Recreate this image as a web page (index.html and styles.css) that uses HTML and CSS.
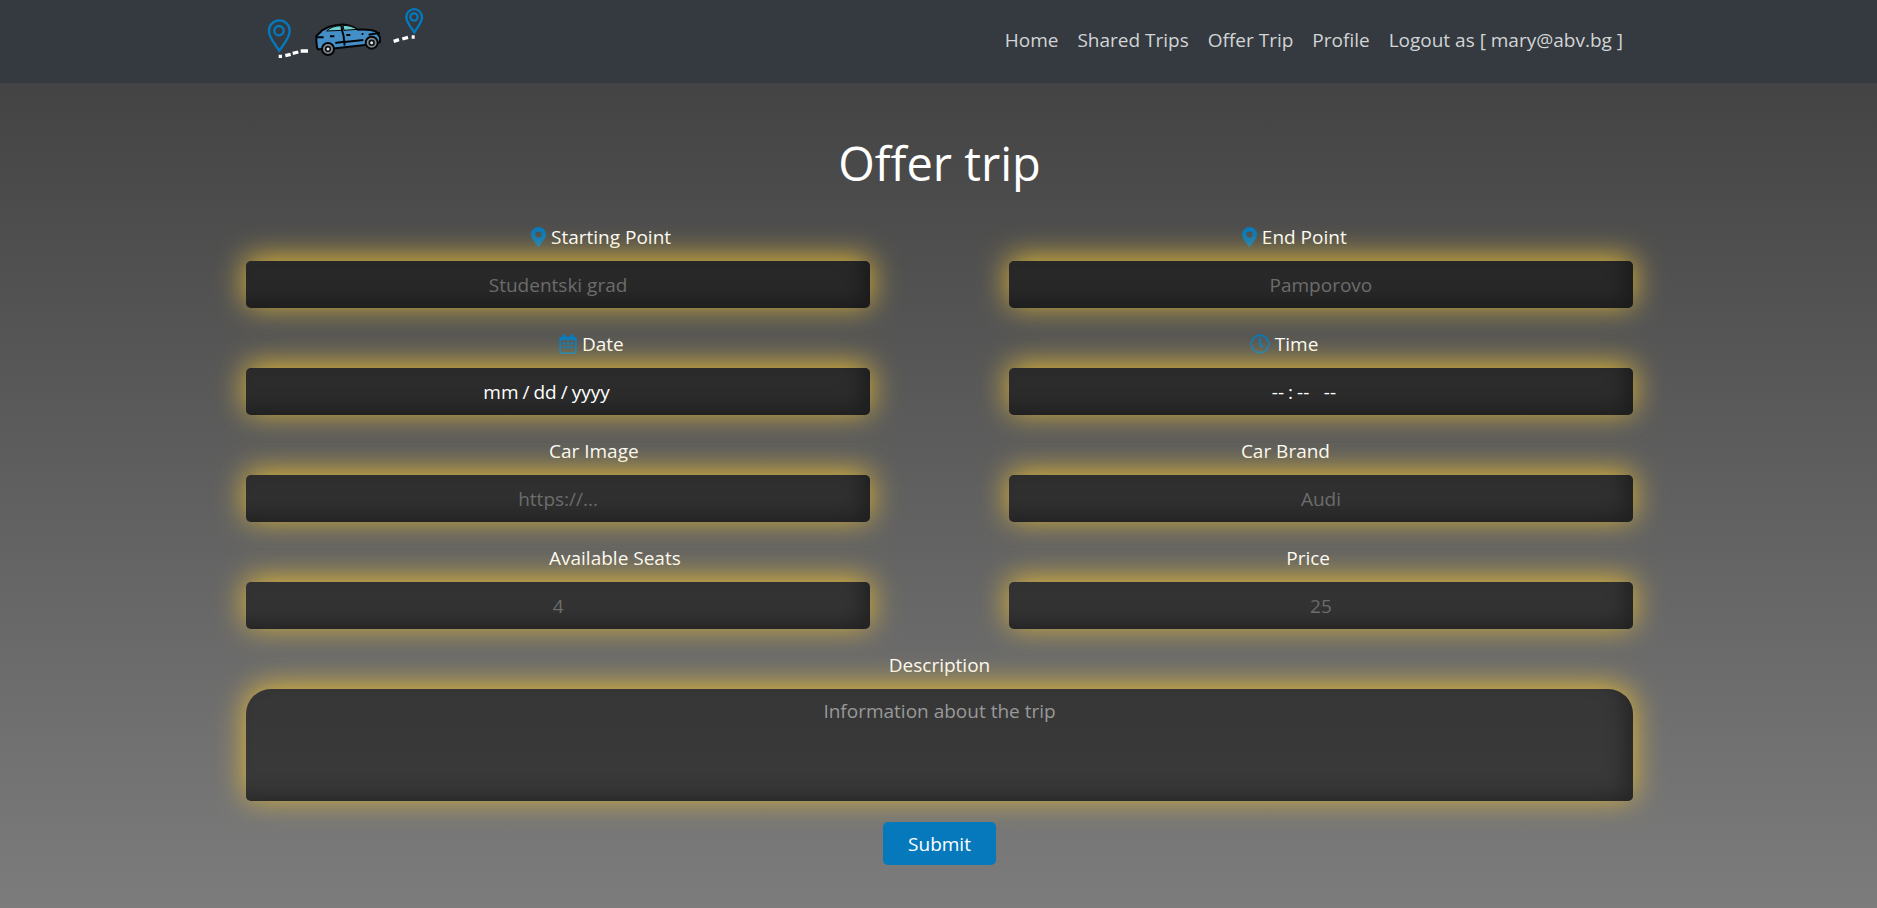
FILE: index.html
```html
<!DOCTYPE html>
<html lang="en">
<head>
<meta charset="utf-8">
<title>Offer trip</title>
<link rel="stylesheet" href="styles.css">
</head>
<body>
<header class="navbar">
  <a class="brand" href="#" aria-label="Shared trips home">
    <svg class="logo" viewBox="45 15 486 165" aria-hidden="true">
      <g fill="none" stroke="#0679bd" stroke-width="7" stroke-linejoin="round">
        <path d="M88 153C75 130 57 115 57 92a31 31 0 0 1 62 0c0 23-18 38-31 61z"/>
        <circle cx="87" cy="92" r="14"/>
        <path d="M493 98C483 80 469 68 469 51a23.500 23.500 0 0 1 47 0c0 17-13 29-23 47z"/>
        <circle cx="492" cy="51" r="11"/>
      </g>
      <g stroke="#fff" stroke-width="10">
        <path d="M86 169h10M106 167l16-4M128 160l17-4M152 153h22M431 124l16-5M457 117l17-5M485 111h9"/>
      </g>
      <g stroke="#050505" stroke-width="6" stroke-linejoin="round">
        <path fill="#458fc9" d="M199 108l12-11 4-5 20-11c18-6 38-8 50-7 16 1 26 7 39 15 20-1 42 0 55 6l11 17v14l-12 5-134 15-40 2-3-6-2-20z"/>
        <path fill="#6ed3d0" stroke-width="3" d="M230 93c9-10 24-15 43-16l3 14zM279 76c16 0 30 4 43 12l-40 3z"/>
        <path fill="none" d="M275 77c-2 10 4 20 6 32l3 28M199 112h22M240 109h13M289 105h12M335 102h5M284 126l56-6M356 104l34-6M256 129l26-4"/>
        <circle cx="234" cy="147" r="18" fill="#7d8893"/>
        <circle cx="365" cy="128" r="18" fill="#7d8893"/>
      </g>
      <g fill="#e8e8e8" stroke="#111" stroke-width="5">
        <circle cx="234" cy="147" r="7"/>
        <circle cx="365" cy="128" r="7"/>
      </g>
    </svg>
  </a>
  <nav class="links">
    <a href="#">Home</a>
    <a href="#">Shared Trips</a>
    <a href="#">Offer Trip</a>
    <a href="#">Profile</a>
    <a href="#">Logout as [ mary@abv.bg ]</a>
  </nav>
</header>
<main class="page">
  <h1 class="title">Offer trip</h1>
  <form class="form">
    <div class="field">
      <label class="label label-start" for="start"><svg class="icon icon-pin" viewBox="0 0 384 512" aria-hidden="true"><path d="M172 502C27 291 0 270 0 192a192 192 0 0 1 384 0c0 78-27 99-172 310a24 24 0 0 1-40 0zM192 272a80 80 0 1 0 0-160 80 80 0 0 0 0 160z"/></svg>Starting Point</label>
      <input class="control" id="start" type="text" placeholder="Studentski grad">
    </div>
    <div class="field">
      <label class="label label-end" for="end"><svg class="icon icon-pin" viewBox="0 0 384 512" aria-hidden="true"><path d="M172 502C27 291 0 270 0 192a192 192 0 0 1 384 0c0 78-27 99-172 310a24 24 0 0 1-40 0zM192 272a80 80 0 1 0 0-160 80 80 0 0 0 0 160z"/></svg>End Point</label>
      <input class="control" id="end" type="text" placeholder="Pamporovo">
    </div>
    <div class="field">
      <label class="label label-date" for="date"><svg class="icon icon-calendar" viewBox="0 0 448 512" aria-hidden="true"><path fill-rule="evenodd" d="M400 64h-48V12c0-7-5-12-12-12h-40c-7 0-12 5-12 12v52H160V12c0-7-5-12-12-12h-40c-7 0-12 5-12 12v52H48a48 48 0 0 0-48 48v352a48 48 0 0 0 48 48h352a48 48 0 0 0 48-48V112a48 48 0 0 0-48-48zM48 160h352v298a6 6 0 0 1-6 6H54a6 6 0 0 1-6-6z"/><path d="M96 208h64v64H96zM192 208h64v64h-64zM288 208h64v64h-64zM96 304h64v64H96zM192 304h64v64h-64zM288 304h64v64h-64z"/></svg>Date</label>
      <input class="control" id="date" type="date">
    </div>
    <div class="field">
      <label class="label label-time" for="time"><svg class="icon icon-clock" viewBox="0 0 512 512" aria-hidden="true"><path fill-rule="evenodd" d="M256 8a248 248 0 1 0 0 496 248 248 0 0 0 0-496zm0 448a200 200 0 1 1 0-400 200 200 0 0 1 0 400z"/><path d="M318 354l-85-62c-3-2-5-6-5-10V116c0-7 5-12 12-12h32c7 0 12 5 12 12v142l67 48c5 4 6 12 2 17l-18 26c-4 6-12 8-17 5z"/></svg>Time</label>
      <input class="control" id="time" type="time">
    </div>
    <div class="field">
      <label class="label label-car" for="image">Car Image</label>
      <input class="control" id="image" type="text" placeholder="https://...">
    </div>
    <div class="field">
      <label class="label label-right" for="brand">Car Brand</label>
      <input class="control" id="brand" type="text" placeholder="Audi">
    </div>
    <div class="field">
      <label class="label label-car" for="seats">Available Seats</label>
      <input class="control" id="seats" type="text" placeholder="4">
    </div>
    <div class="field">
      <label class="label label-right" for="price">Price</label>
      <input class="control" id="price" type="text" placeholder="25">
    </div>
    <div class="field field-wide">
      <label class="label label-center" for="description">Description</label>
      <textarea class="control control-area" id="description" placeholder="Information about the trip"></textarea>
    </div>
    <button class="submit" type="submit">Submit</button>
  </form>
</main>
</body>
</html>
```
FILE: styles.css
```css
* {
  box-sizing: border-box;
}

body {
  margin: 0;
  min-height: 100vh;
  font-family: "Segoe UI", "Open Sans", sans-serif;
  font-size: 19px;
  line-height: 30px;
  color: #fff;
  background: linear-gradient(#3e3e3e, #7c7c7c) no-repeat;
}

.navbar {
  display: flex;
  justify-content: space-between;
  align-items: flex-start;
  height: 83px;
  padding: 5px 254px 0 265px;
  background: #343a40;
}

.brand,
.logo {
  display: block;
}

.logo {
  width: 162px;
  height: 55px;
}

.links {
  display: flex;
  gap: 19px;
  padding-top: 20px;
}

.links a {
  color: #d2d4d5;
  text-decoration: none;
}

.page {
  padding: 50px 244px 40px 246px;
}

.title {
  margin: 0 0 28px;
  font-size: 47px;
  font-weight: 400;
  line-height: 61px;
  text-align: center;
}

.form {
  display: grid;
  grid-template-columns: 1fr 1fr;
  column-gap: 10%;
  row-gap: 21px;
}

.field {
  display: flex;
  flex-direction: column;
  gap: 9px;
}

.field-wide,
.submit {
  grid-column: 1 / -1;
}

.label {
  display: flex;
  align-items: center;
  gap: 5px;
}

.label-start { padding-left: 285px; }
.label-date { padding-left: 313px; }
.label-car { padding-left: 303px; }
.label-end { padding-left: 233px; }
.label-time { padding-left: 241px; }
.label-right { justify-content: flex-end; padding-right: 303px; }
.label-center { justify-content: center; }

.icon {
  height: 20px;
  fill: #0679bd;
}

.icon-pin { width: 15px; }
.icon-calendar { width: 18px; }
.icon-clock { width: 20px; }

.control {
  width: 100%;
  height: 47px;
  padding: 4px 12px 3px;
  border: 0;
  border-radius: 5px;
  outline: 0;
  font: inherit;
  color: #fff;
  text-align: center;
  background: rgba(0, 0, 0, 0.5);
  box-shadow: 0 -3px 30px rgb(228, 186, 56), inset -12px -10px 20px -4px rgba(0, 0, 0, 0.35);
}

.control::placeholder {
  color: #6c6c6c;
}

.control::-webkit-calendar-picker-indicator {
  opacity: 0;
}

.control::-webkit-datetime-edit-text {
  padding: 0 3px;
}

.control::-webkit-datetime-edit-ampm-field {
  padding-left: 5px;
}

.control-area {
  display: block;
  height: 112px;
  padding: 7px 12px;
  border-radius: 25px 25px 5px 5px;
  resize: none;
}

.control-area::placeholder {
  color: #999;
}

.submit {
  justify-self: center;
  width: 113px;
  height: 43px;
  padding: 0;
  border: 0;
  border-radius: 5px;
  font: inherit;
  color: #fff;
  background: #0679bd;
}
```
